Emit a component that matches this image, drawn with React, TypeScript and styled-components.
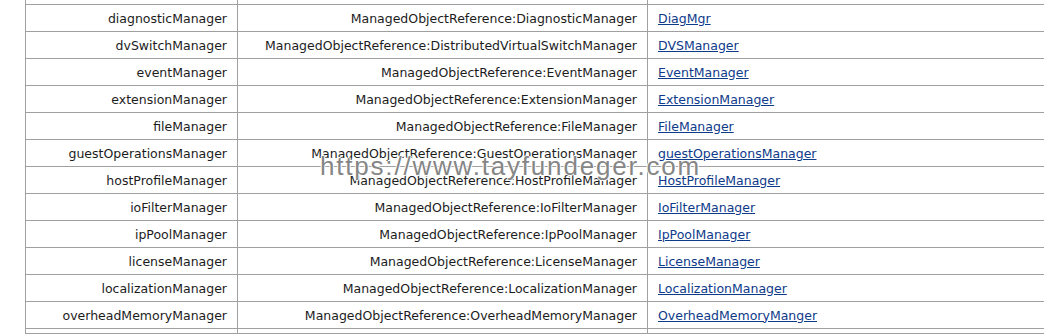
import styled, { createGlobalStyle } from "styled-components";

const GlobalStyle = createGlobalStyle`
  html, body {
    margin: 0;
    padding: 0;
    background: #ffffff;
    overflow: hidden;
  }
`;

interface CellProps {
  align: "left" | "right";
}

const Page = styled.div`
  position: relative;
  padding-left: 25px;
  width: 1044px;
  height: 334px;
  overflow: hidden;
  font-family: "DejaVu Sans", Verdana, sans-serif;
  font-size: 12.5px;
  color: #1c1c1c;
`;

const Table = styled.table`
  border-collapse: separate;
  border-spacing: 0;
  border-left: 1px solid #a0a0a0;
  width: 1100px;
  table-layout: fixed;
`;

const Row = styled.tr``;

const StubCell = styled.td`
  height: 4px;
  padding: 0;
  border-right: 1px solid #a0a0a0;
  border-bottom: 1px solid #a0a0a0;
`;

const Cell = styled.td<CellProps>`
  height: 27px;
  padding: 0 10px;
  box-sizing: border-box;
  text-align: ${(p) => p.align};
  vertical-align: middle;
  white-space: nowrap;
  border-right: 1px solid #a0a0a0;
  border-bottom: 1px solid #a0a0a0;
`;

const Link = styled.a`
  color: #0e3a8a;
  text-decoration: underline;
`;

const Watermark = styled.div`
  position: absolute;
  left: 320px;
  top: 151px;
  font-family: "Liberation Sans", Arial, sans-serif;
  font-size: 26px;
  letter-spacing: 1.8px;
  color: #868686;
  text-shadow: -1px 0 #ffffff, 1px 0 #ffffff, 0 -1px #ffffff, 0 1px #ffffff;
  pointer-events: none;
  white-space: nowrap;
`;

const rows = [
  ["diagnosticManager", "ManagedObjectReference:DiagnosticManager", "DiagMgr"],
  ["dvSwitchManager", "ManagedObjectReference:DistributedVirtualSwitchManager", "DVSManager"],
  ["eventManager", "ManagedObjectReference:EventManager", "EventManager"],
  ["extensionManager", "ManagedObjectReference:ExtensionManager", "ExtensionManager"],
  ["fileManager", "ManagedObjectReference:FileManager", "FileManager"],
  ["guestOperationsManager", "ManagedObjectReference:GuestOperationsManager", "guestOperationsManager"],
  ["hostProfileManager", "ManagedObjectReference:HostProfileManager", "HostProfileManager"],
  ["ioFilterManager", "ManagedObjectReference:IoFilterManager", "IoFilterManager"],
  ["ipPoolManager", "ManagedObjectReference:IpPoolManager", "IpPoolManager"],
  ["licenseManager", "ManagedObjectReference:LicenseManager", "LicenseManager"],
  ["localizationManager", "ManagedObjectReference:LocalizationManager", "LocalizationManager"],
  ["overheadMemoryManager", "ManagedObjectReference:OverheadMemoryManager", "OverheadMemoryManger"],
];

export default function App() {
  return (
    <>
      <GlobalStyle />
      <Page>
        <Table>
          <colgroup>
            <col style={{ width: 212 }} />
            <col style={{ width: 410 }} />
            <col />
          </colgroup>
          <tbody>
            <Row>
              <StubCell />
              <StubCell />
              <StubCell />
            </Row>
            {rows.map(([name, type, value]) => (
              <Row key={name}>
                <Cell align="right">{name}</Cell>
                <Cell align="right">{type}</Cell>
                <Cell align="left">
                  <Link href="#">{value}</Link>
                </Cell>
              </Row>
            ))}
            <Row>
              <StubCell />
              <StubCell />
              <StubCell />
            </Row>
          </tbody>
        </Table>
        <Watermark>https://www.tayfundeger.com</Watermark>
      </Page>
    </>
  );
}
